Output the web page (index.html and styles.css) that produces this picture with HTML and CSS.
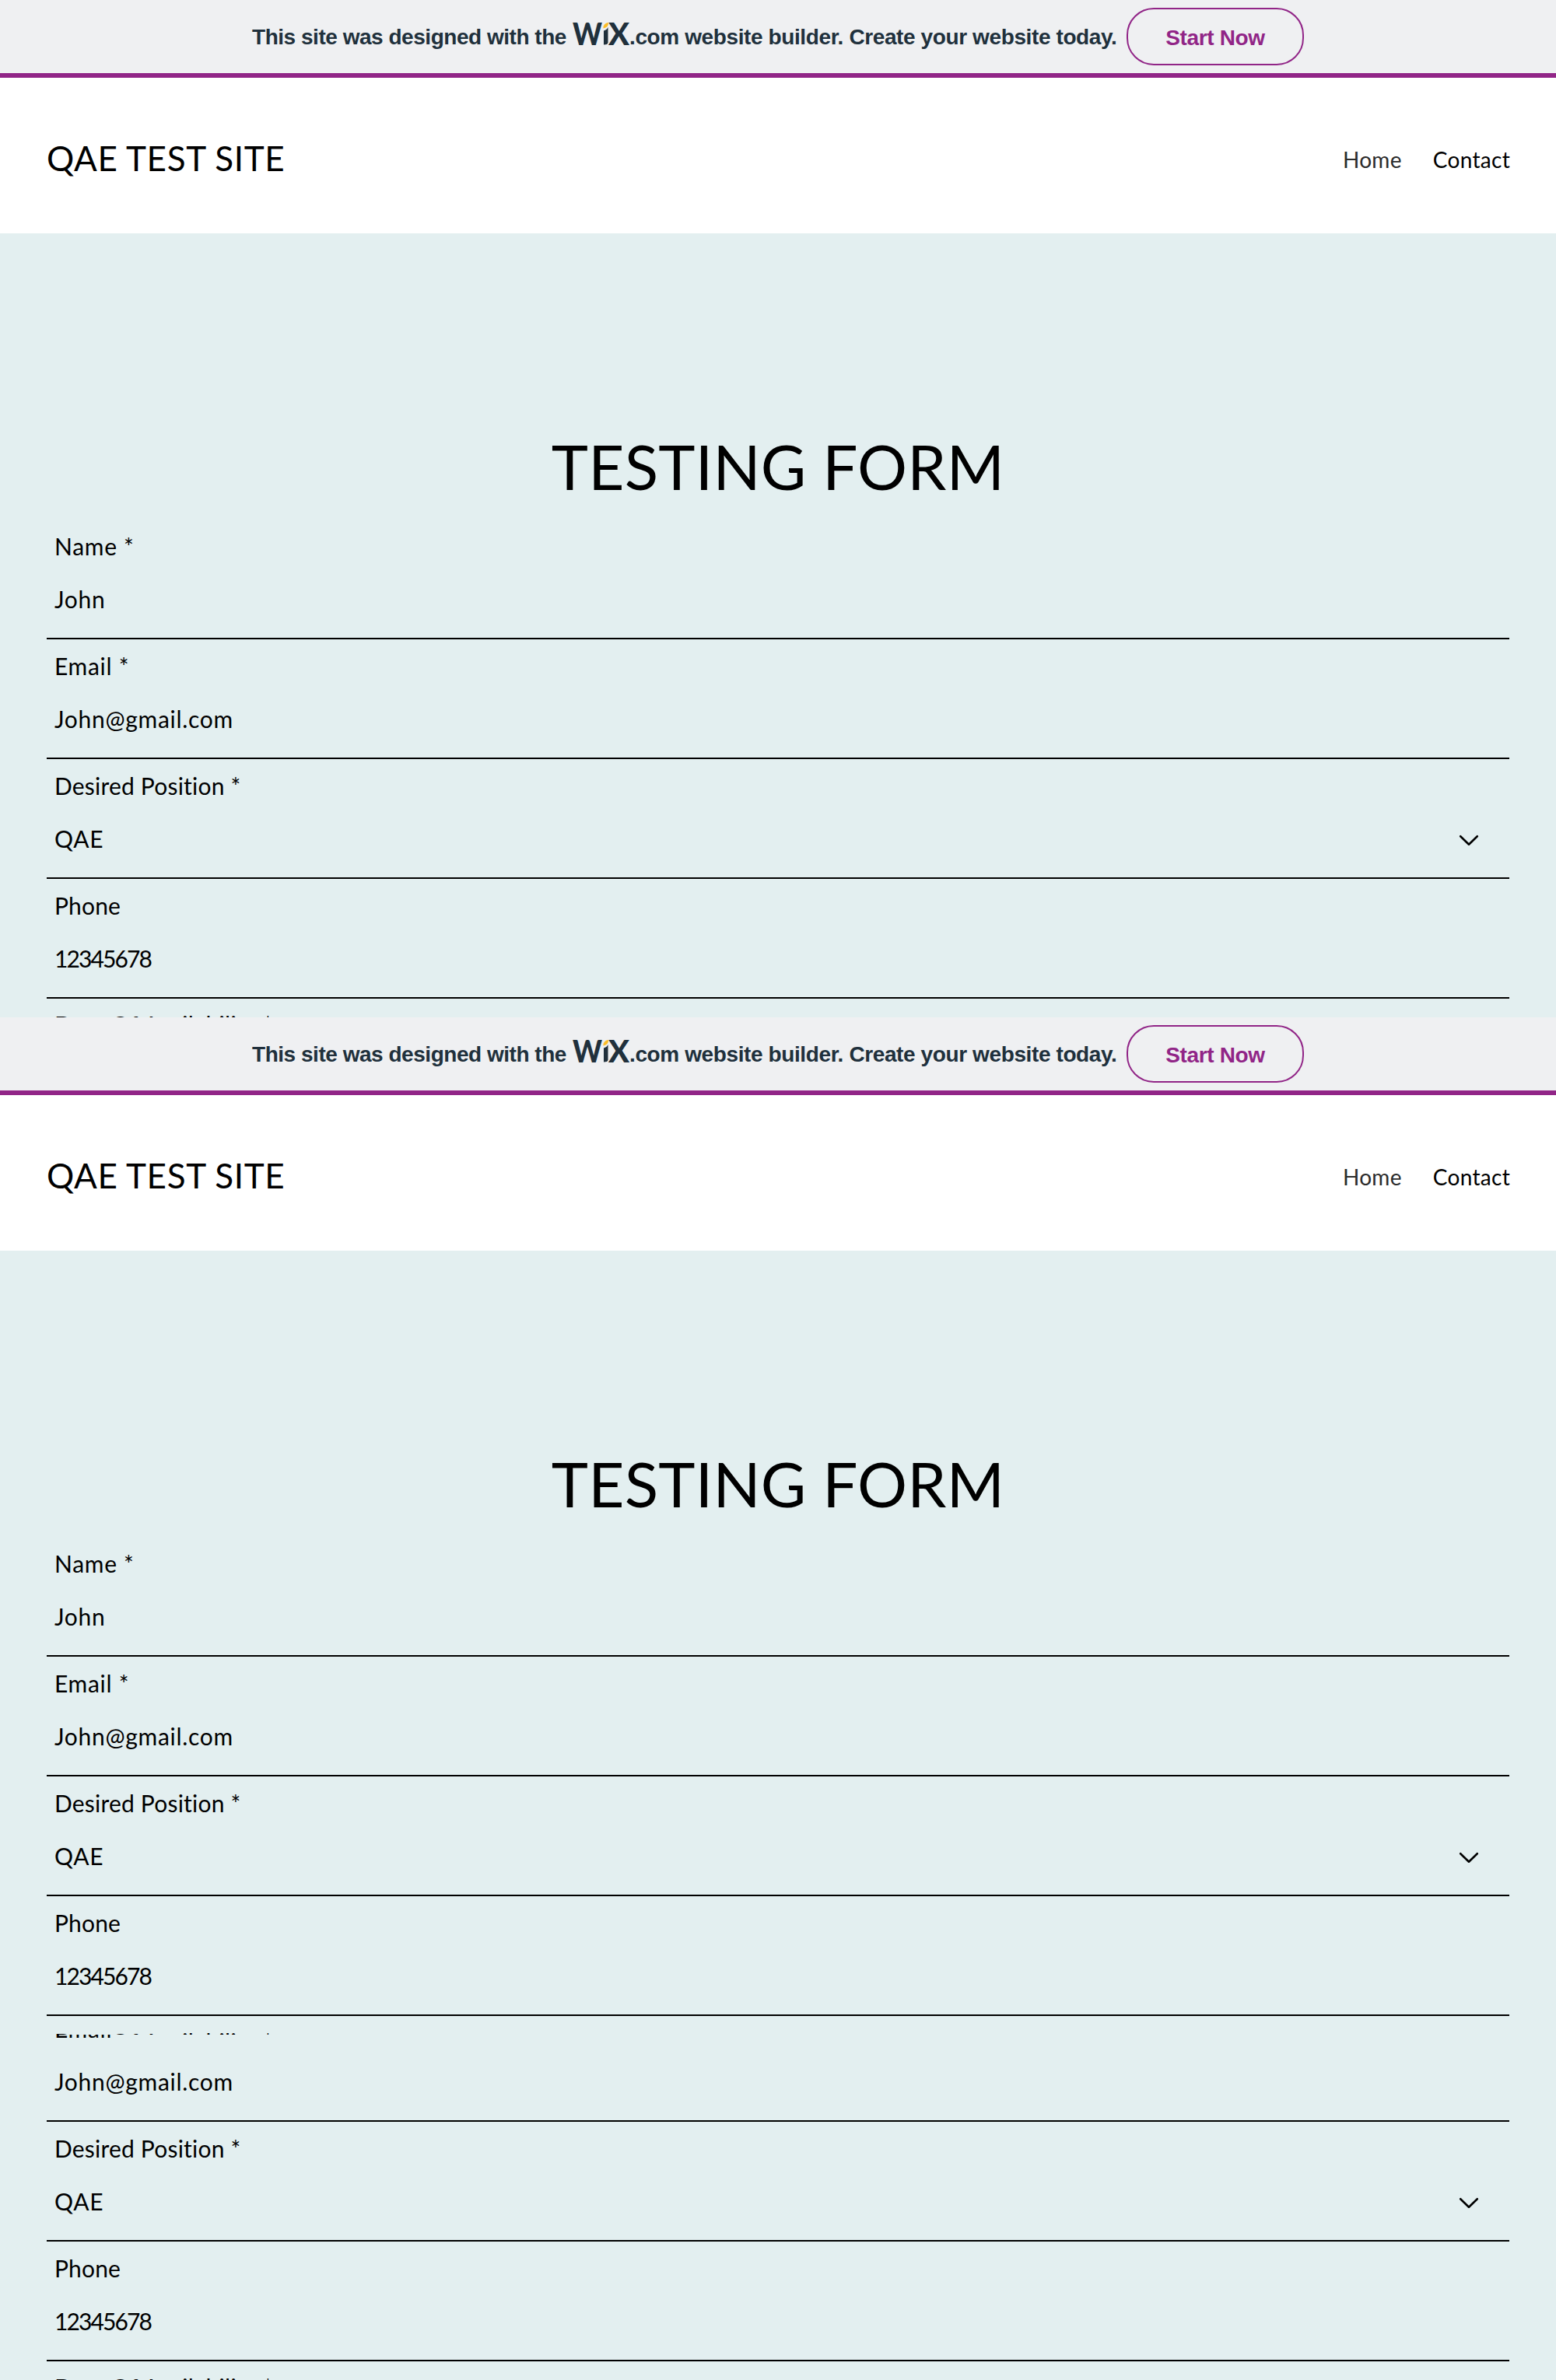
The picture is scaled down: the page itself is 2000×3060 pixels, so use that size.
FILE: index.html
```html
<!DOCTYPE html>
<html lang="en">
<head>
<meta charset="utf-8">
<title>QAE TEST SITE</title>
<link rel="stylesheet" href="styles.css">
</head>
<body>
<section class="pane">
  <div class="banner">
    <span class="banner-text banner-lead">This site was designed with the</span>
    <svg class="wix" width="74" height="30" viewBox="0 0 74 30" role="img" aria-label="Wix">
      <text class="wix-letter" x="0" y="28.5" textLength="38" lengthAdjust="spacingAndGlyphs">W</text>
      <path class="wix-stem" d="M40 10.5Q44 9.5 45.5 6V26Q45 28.5 40 28.5Z"/>
      <text class="wix-letter" x="46" y="28.5" textLength="27" lengthAdjust="spacingAndGlyphs">X</text>
      <path class="wix-leaf" d="M39.500 7.500Q39 1 46 0Q46.500 6 39.500 7.500Z"/>
    </svg>
    <span class="banner-text banner-tail">.com website builder. Create your website today.</span>
    <a class="start">Start Now</a>
  </div>
  <header class="header">
    <div class="site-title">QAE TEST SITE</div>
    <nav class="nav"><a class="current">Home</a><a>Contact</a></nav>
  </header>
  <main class="main">
    <h1 class="heading">TESTING FORM</h1>
    <div class="form">
      <div class="field"><div class="label">Name *</div><div class="value">John</div></div>
      <div class="field"><div class="label">Email *</div><div class="value">John@gmail.com</div></div>
      <div class="field"><div class="label position">Desired Position *</div><div class="value select">QAE
        <svg class="chevron" width="26" height="16" viewBox="0 0 26 16"><path d="M2.200 2.200L13 12.700L23.800 2.200"/></svg></div></div>
      <div class="field"><div class="label phone">Phone</div><div class="value digits">12345678</div></div>
      <div class="field"><div class="label date">Date Of Availability *</div></div>
    </div>
  </main>
</section>
<section class="pane">
  <div class="banner">
    <span class="banner-text banner-lead">This site was designed with the</span>
    <svg class="wix" width="74" height="30" viewBox="0 0 74 30" role="img" aria-label="Wix">
      <text class="wix-letter" x="0" y="28.5" textLength="38" lengthAdjust="spacingAndGlyphs">W</text>
      <path class="wix-stem" d="M40 10.5Q44 9.5 45.5 6V26Q45 28.5 40 28.5Z"/>
      <text class="wix-letter" x="46" y="28.5" textLength="27" lengthAdjust="spacingAndGlyphs">X</text>
      <path class="wix-leaf" d="M39.500 7.500Q39 1 46 0Q46.500 6 39.500 7.500Z"/>
    </svg>
    <span class="banner-text banner-tail">.com website builder. Create your website today.</span>
    <a class="start">Start Now</a>
  </div>
  <header class="header">
    <div class="site-title">QAE TEST SITE</div>
    <nav class="nav"><a class="current">Home</a><a>Contact</a></nav>
  </header>
  <main class="main">
    <h1 class="heading">TESTING FORM</h1>
    <div class="form">
      <div class="field"><div class="label">Name *</div><div class="value">John</div></div>
      <div class="field"><div class="label">Email *</div><div class="value">John@gmail.com</div></div>
      <div class="field"><div class="label position">Desired Position *</div><div class="value select">QAE
        <svg class="chevron" width="26" height="16" viewBox="0 0 26 16"><path d="M2.200 2.200L13 12.700L23.800 2.200"/></svg></div></div>
      <div class="field"><div class="label phone">Phone</div><div class="value digits">12345678</div></div>
      <div class="field"><div class="label date">Date Of Availability *</div></div>
    </div>
  </main>
</section>
<section class="pane pane-rest">
  <div class="form form-scrolled">
    <div class="field"><div class="label">Email</div><div class="value">John@gmail.com</div></div>
    <div class="field"><div class="label position">Desired Position *</div><div class="value select">QAE
      <svg class="chevron" width="26" height="16" viewBox="0 0 26 16"><path d="M2.200 2.200L13 12.700L23.800 2.200"/></svg></div></div>
    <div class="field"><div class="label phone">Phone</div><div class="value digits">12345678</div></div>
    <div class="field"><div class="label date">Date Of Availability *</div></div>
  </div>
</section>
</body>
</html>
```
FILE: styles.css
```css
* { box-sizing: border-box; }
body {
  margin: 0;
  width: 2000px;
  background: #e3eff0;
  color: #000;
  font-family: Lato, "Liberation Sans", sans-serif;
  font-variant-ligatures: none;
}
.pane { height: 1308px; overflow: hidden; background: #e3eff0; }
.pane-rest { height: 444px; }

.banner {
  display: flex;
  height: 100px;
  padding: 10px 0 0 324px;
  background: #eff0f2;
  border-bottom: 6px solid #912587;
  font-family: "Liberation Sans", sans-serif;
  font-weight: 700;
  font-size: 28px;
  line-height: 32px;
  color: #20303c;
  white-space: nowrap;
}
.banner-text { margin-top: 22px; }
.banner-lead { width: 412px; letter-spacing: -0.47px; }
.wix { flex: none; margin-top: 19px; overflow: visible; }
.wix-letter { font: 900 39px Lato, sans-serif; fill: #20303c; }
.wix-stem { fill: #20303c; }
.wix-leaf { fill: #fbbd28; }
.banner-tail { width: 639px; margin-left: -1px; letter-spacing: -0.39px; }
.start {
  width: 228px;
  height: 74px;
  border: 2px solid #912587;
  border-radius: 35px;
  line-height: 73px;
  text-align: center;
  letter-spacing: -0.36px;
  color: #912587;
}

.header {
  display: flex;
  justify-content: space-between;
  align-items: flex-start;
  height: 200px;
  padding: 77px 59px 0 60px;
  background: #fff;
}
.site-title { font-size: 44px; line-height: 53px; letter-spacing: 0.62px; }
.nav {
  display: flex;
  gap: 40px;
  margin-top: 11px;
  font-size: 28px;
  line-height: 34px;
  letter-spacing: 0.3px;
}
.nav .current { color: #2b2b2b; }

.main { padding-top: 251px; }
.heading {
  margin: 0 0 36px;
  font-size: 80px;
  line-height: 96px;
  font-weight: 400;
  letter-spacing: 0.24px;
  text-align: center;
}

.form {
  display: flex;
  flex-direction: column;
  gap: 15px;
  padding: 0 60px;
}
.form-scrolled { margin-top: -27px; }
.field {
  display: flex;
  flex-direction: column;
  gap: 32px;
  height: 139px;
  flex: none;
  padding: 1px 10px 0;
  border-bottom: 2px solid #000;
  font-size: 30px;
  line-height: 36px;
  letter-spacing: 0.7px;
}
.position { letter-spacing: 0.2px; }
.phone { letter-spacing: 0.15px; }
.date { margin-top: -1px; letter-spacing: 0.3px; }
.digits { letter-spacing: -1.9px; }
.select {
  display: flex;
  justify-content: space-between;
  align-items: center;
  height: 36px;
  padding-right: 29px;
}
.chevron { margin-top: 5px; }
.chevron path { fill: none; stroke: #000; stroke-width: 2.6; stroke-linecap: round; stroke-linejoin: round; }
```
